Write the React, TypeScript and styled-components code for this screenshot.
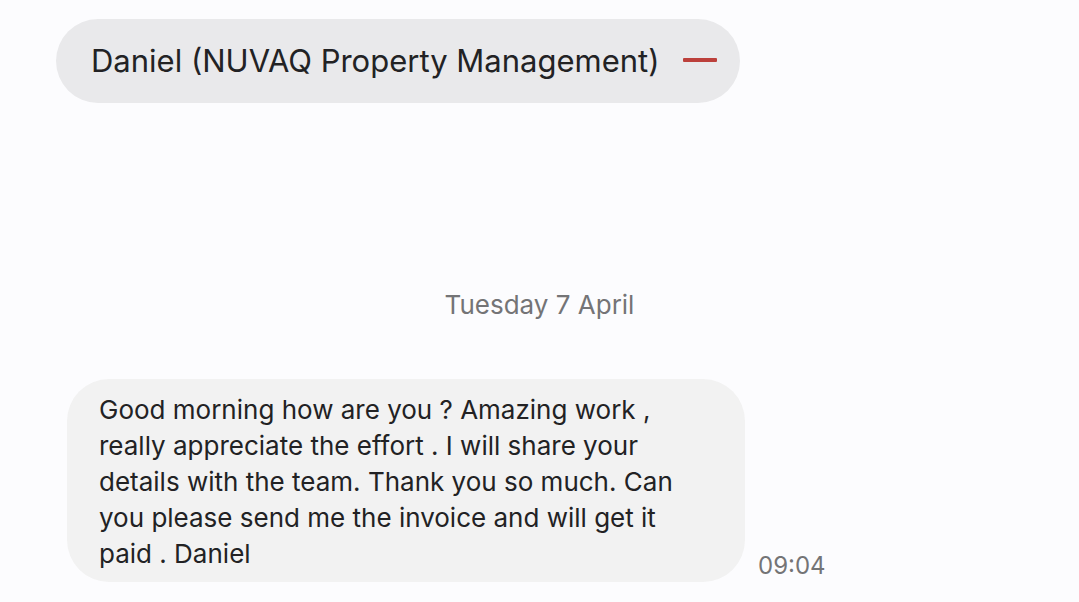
import React from 'react'
import styled, { createGlobalStyle } from 'styled-components'

interface IMessage {
  text: string
  time: string
}

const message: IMessage = {
  text: `Good morning how are you ? Amazing work ,
really appreciate the effort . I will share your
details with the team. Thank you so much. Can
you please send me the invoice and will get it
paid . Daniel`,
  time: '09:04',
}

const App: React.FC = () => {
  return (
    <>
      <GlobalStyle />
      <Container>
        <Recipient>
          <RecipientName>Daniel (NUVAQ Property Management)</RecipientName>
          <RemoveButton type="button" aria-label="Remove recipient">
            <MinusIcon viewBox="0 0 36 6" aria-hidden="true">
              <rect x="1" width="34" height="4" rx="1" fill="#bc403b" />
            </MinusIcon>
          </RemoveButton>
        </Recipient>

        <DateLabel>Tuesday 7 April</DateLabel>

        <MessageRow>
          <Bubble>{message.text}</Bubble>
          <Time>{message.time}</Time>
        </MessageRow>
      </Container>
    </>
  )
}

export default App

const GlobalStyle = createGlobalStyle`
  * {
    box-sizing: border-box;
  }

  body {
    margin: 0;
    background: #fcfcfe;
    font-family: Inter, sans-serif;
  }
`

const Container = styled.main`
  display: flex;
  flex-direction: column;
  align-items: flex-start;
  padding: 19px 56px 20px;
`

const Recipient = styled.header`
  display: flex;
  align-items: center;
  gap: 22px;
  padding: 20px 22px 20px 35px;
  border-radius: 42px;
  background: #e9e9eb;
`

const RecipientName = styled.h1`
  margin: 0;
  font-weight: 400;
  font-size: 31px;
  line-height: 44px;
  white-space: nowrap;
  color: #222224;
`

const RemoveButton = styled.button`
  display: flex;
  padding: 0;
  border: none;
  background: none;
  cursor: pointer;
`

const MinusIcon = styled.svg`
  width: 36px;
  height: 6px;
`

const DateLabel = styled.div`
  align-self: center;
  margin-top: 184px;
  font-size: 26px;
  line-height: 36px;
  color: #747476;
`

const MessageRow = styled.div`
  display: flex;
  align-items: flex-end;
  gap: 13px;
  margin-top: 56px;
  padding-left: 11px;
`

const Bubble = styled.p`
  width: 678px;
  margin: 0;
  padding: 13px 32px 10px;
  border-radius: 42px;
  background: #f2f2f2;
  font-size: 26px;
  line-height: 36px;
  white-space: pre-line;
  color: #222224;
`

const Time = styled.time`
  font-size: 24px;
  line-height: 32px;
  color: #747476;
`
